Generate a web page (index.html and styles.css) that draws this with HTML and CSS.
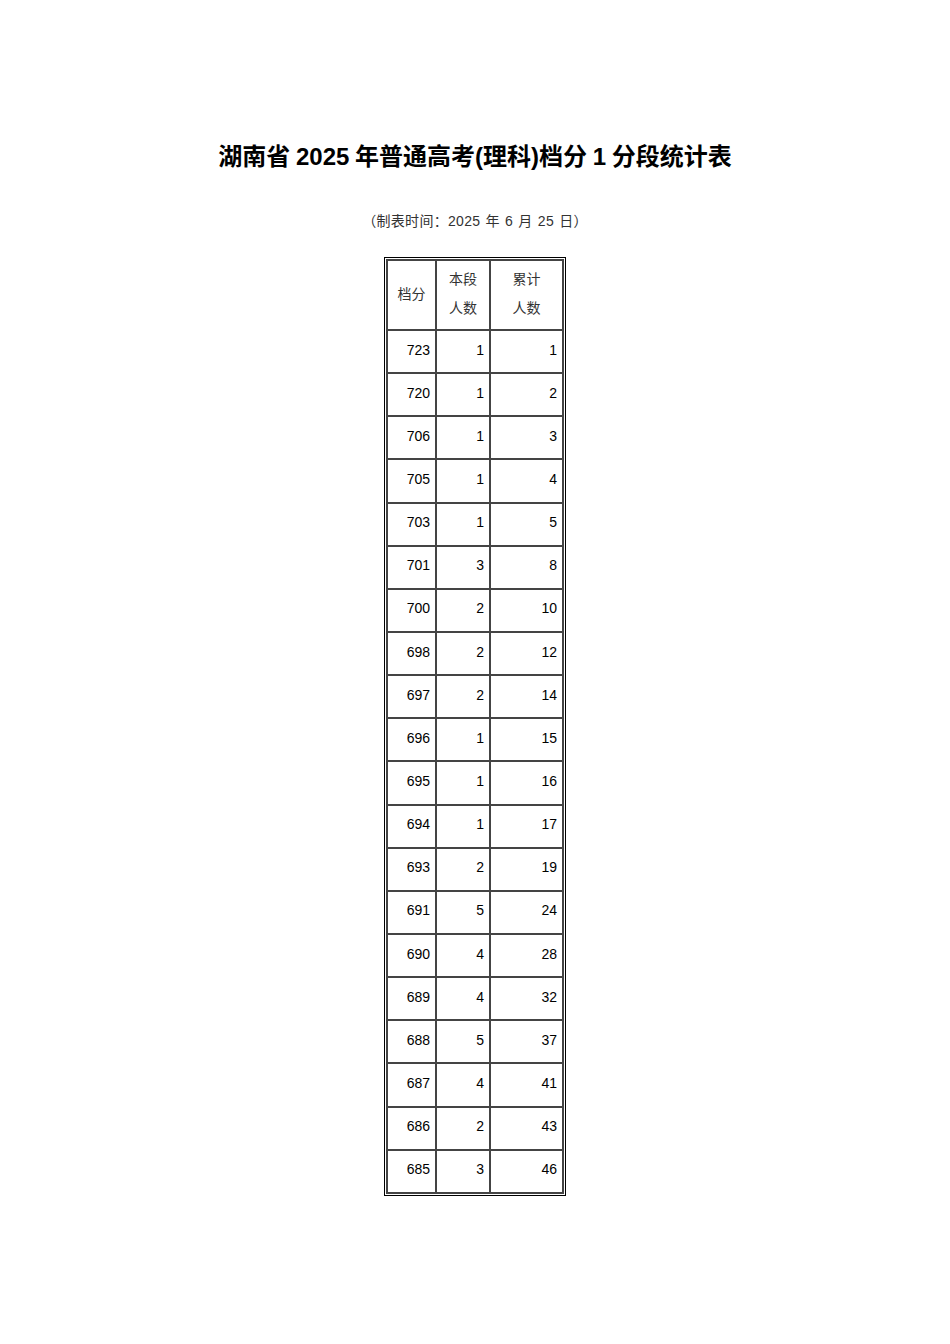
FILE: index.html
```html
<!DOCTYPE html>
<html lang="zh-CN">
<head>
<meta charset="utf-8">
<title>湖南省2025年普通高考(理科)档分1分段统计表</title>
<link rel="stylesheet" href="styles.css">
</head>
<body>
<div class="page">
  <h1 class="title">湖南省 2025 年普通高考(理科)档分 1 分段统计表</h1>
  <p class="subtitle">（制表时间：2025 年 6 月 25 日）</p>
  <div class="frame">
    <table class="grid">
      <thead>
        <tr class="head">
          <th class="c1">档分</th>
          <th class="c2">本段<br>人数</th>
          <th class="c3">累计<br>人数</th>
        </tr>
      </thead>
      <tbody>
        <tr><td>723</td><td>1</td><td>1</td></tr>
        <tr><td>720</td><td>1</td><td>2</td></tr>
        <tr><td>706</td><td>1</td><td>3</td></tr>
        <tr><td>705</td><td>1</td><td>4</td></tr>
        <tr><td>703</td><td>1</td><td>5</td></tr>
        <tr><td>701</td><td>3</td><td>8</td></tr>
        <tr><td>700</td><td>2</td><td>10</td></tr>
        <tr><td>698</td><td>2</td><td>12</td></tr>
        <tr><td>697</td><td>2</td><td>14</td></tr>
        <tr><td>696</td><td>1</td><td>15</td></tr>
        <tr><td>695</td><td>1</td><td>16</td></tr>
        <tr><td>694</td><td>1</td><td>17</td></tr>
        <tr><td>693</td><td>2</td><td>19</td></tr>
        <tr><td>691</td><td>5</td><td>24</td></tr>
        <tr><td>690</td><td>4</td><td>28</td></tr>
        <tr><td>689</td><td>4</td><td>32</td></tr>
        <tr><td>688</td><td>5</td><td>37</td></tr>
        <tr><td>687</td><td>4</td><td>41</td></tr>
        <tr><td>686</td><td>2</td><td>43</td></tr>
        <tr><td>685</td><td>3</td><td>46</td></tr>
      </tbody>
    </table>
  </div>
</div>
</body>
</html>
```

FILE: styles.css
```css
html, body {
  margin: 0;
  padding: 0;
  background: #ffffff;
}

body {
  font-family: "Liberation Sans", "Noto Sans CJK SC", sans-serif;
  color: #000;
}

.page {
  width: 950px;
  display: flex;
  flex-direction: column;
  align-items: center;
  padding-top: 142px;
}

.title {
  margin: 0;
  font-size: 24px;
  line-height: 30px;
  font-weight: bold;
  white-space: nowrap;
  word-spacing: -1px;
}

.subtitle {
  margin: 39px 0 0 0;
  font-size: 14px;
  line-height: 20px;
  color: #333;
  white-space: nowrap;
  word-spacing: 1px;
  letter-spacing: 0.3px;
}

.frame {
  margin-top: 26px;
  border: 1px solid #000;
  padding: 1px;
}

.grid {
  border-collapse: collapse;
  font-size: 14px;
}

.grid th,
.grid td {
  border: 2px solid #444;
  padding: 0 5px 0 0;
  vertical-align: middle;
}

.grid th {
  font-weight: normal;
  color: #333;
  text-align: center;
  line-height: 29px;
  height: 66px;
  padding: 0 0 2px 0;
}

.grid td {
  text-align: right;
  height: 37.15px;
  line-height: 16px;
  padding-bottom: 4px;
  padding-right: 5px;
}

.c1 { width: 47px; }
.c2 { width: 52px; }
.c3 { width: 71px; }
```
